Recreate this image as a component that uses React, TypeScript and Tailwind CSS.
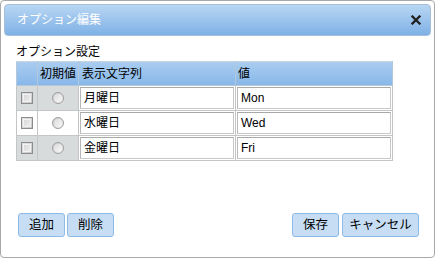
import React from 'react';

const rows = [
  { label: '月曜日', value: 'Mon', shaded: true },
  { label: '水曜日', value: 'Wed', shaded: false },
  { label: '金曜日', value: 'Fri', shaded: true },
];

const font = { fontFamily: '"Liberation Sans", "Noto Sans CJK JP", sans-serif' };

function Checkbox() {
  return (
    <div className="w-[12px] h-[12px] border border-[#8c8c8c] bg-gradient-to-br from-[#e6e6e6] to-[#c4c4c4] p-[1px]">
      <div className="w-full h-full border border-[#f2f2f2] bg-gradient-to-br from-[#d8d8d8] to-[#ececec]"></div>
    </div>
  );
}

function Radio() {
  return (
    <div className="w-[12px] h-[12px] rounded-full border border-[#a0a0a0] bg-gradient-to-br from-[#c8c8c8] to-[#f4f4f4] p-[1px]">
      <div className="w-full h-full rounded-full bg-gradient-to-br from-[#dcdcdc] to-[#f8f8f8]"></div>
    </div>
  );
}

function Btn({ children, w }: { children: React.ReactNode; w: string }) {
  return (
    <button className={`${w} h-[24px] rounded-[3px] border border-[#8dbbe8] bg-[#c6ddf4] text-[12.5px] text-black leading-none`}>
      {children}
    </button>
  );
}

export default function App() {
  return (
    <div className="w-[437px] h-[258px] bg-white text-[12px] text-black" style={font}>
      <div className="w-[435px] h-[258px] border border-[#a8a8a8] rounded-[4px] bg-white p-[3px] flex flex-col">
        {/* Title bar */}
        <div className="h-[32px] rounded-[4px] border border-[#a7bfd8] bg-gradient-to-b from-[#b8d6f3] to-[#7fb1e6] flex items-center justify-between pl-[12px] pr-[9px]">
          <span className="text-white text-[12px]">オプション編集</span>
          <svg width="10" height="10" viewBox="0 0 10 10">
            <path d="M1.5 1.5 L8.5 8.5 M8.5 1.5 L1.5 8.5" stroke="#222" strokeWidth="2.3" strokeLinecap="square" />
          </svg>
        </div>

        {/* Content */}
        <div className="px-[12px] pt-[7px] flex-1 flex flex-col">
          <div className="h-[18px] leading-[18px]">オプション設定</div>
          <table className="border-collapse w-[376px] table-fixed">
            <colgroup>
              <col className="w-[21px]" />
              <col className="w-[41px]" />
              <col className="w-[157px]" />
              <col className="w-[157px]" />
            </colgroup>
            <thead>
              <tr className="h-[24px] bg-gradient-to-b from-[#aacdf0] to-[#86b6e8]">
                <th className="border border-[#b4c8dc] border-t-[#c8d4e0]"></th>
                <th className="border border-[#b4c8dc] border-t-[#c8d4e0] font-normal text-left pl-[2px]">初期値</th>
                <th className="border border-[#b4c8dc] border-t-[#c8d4e0] font-normal text-left pl-[3px]">表示文字列</th>
                <th className="border border-[#b4c8dc] border-t-[#c8d4e0] font-normal text-left pl-[2px]">値</th>
              </tr>
            </thead>
            <tbody>
              {rows.map((r) => (
                <tr key={r.label} className="h-[25px]">
                  <td className={`border border-[#c4c6c6] ${r.shaded ? 'bg-[#d8dbdb]' : 'bg-white'}`}>
                    <div className="flex justify-center">
                      <Checkbox />
                    </div>
                  </td>
                  <td className={`border border-[#c4c6c6] ${r.shaded ? 'bg-[#d8dbdb]' : 'bg-white'}`}>
                    <div className="flex justify-center">
                      <Radio />
                    </div>
                  </td>
                  <td className="border border-[#c4c6c6] p-0">
                    <div className="mx-[1px] h-[22px] border border-[#c8c8c8] border-t-[#a8a8a8] border-l-[#b8b8b8] bg-white flex items-center pl-[3px]">
                      {r.label}
                    </div>
                  </td>
                  <td className="border border-[#c4c6c6] p-0">
                    <div className="mx-[1px] h-[22px] border border-[#c8c8c8] border-t-[#a8a8a8] border-l-[#b8b8b8] bg-white flex items-center pl-[3px]">
                      {r.value}
                    </div>
                  </td>
                </tr>
              ))}
            </tbody>
          </table>

          <div className="mt-auto mb-[17px] ml-[2px] flex justify-between">
            <div className="flex gap-[2px]">
              <Btn w="w-[47px]">追加</Btn>
              <Btn w="w-[47px]">削除</Btn>
            </div>
            <div className="flex gap-[3px]">
              <Btn w="w-[47px]">保存</Btn>
              <Btn w="w-[77px]">キャンセル</Btn>
            </div>
          </div>
        </div>
      </div>
    </div>
  );
}
